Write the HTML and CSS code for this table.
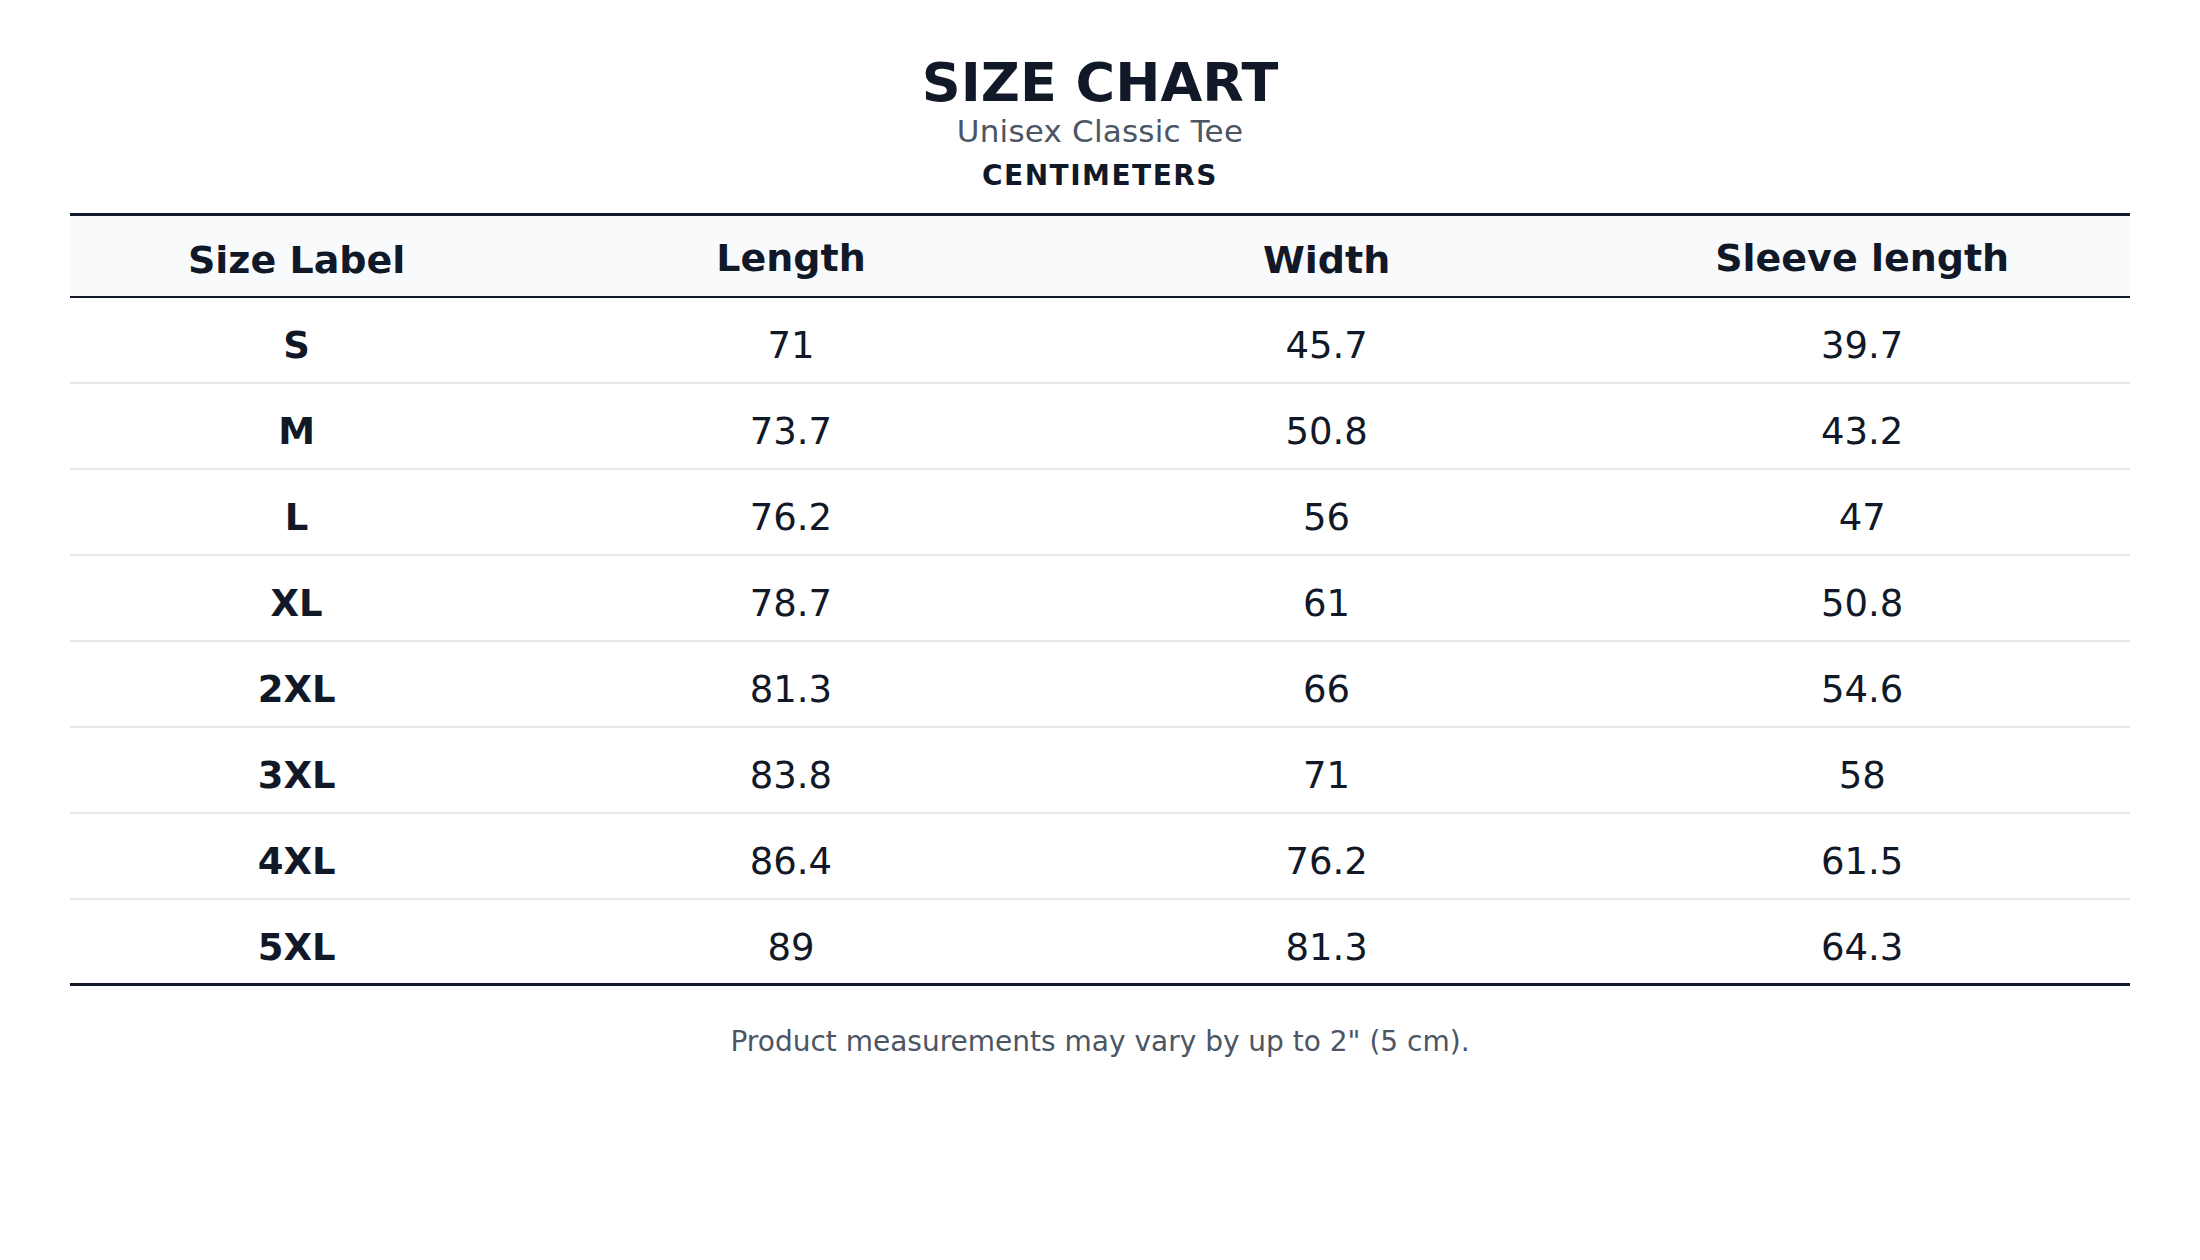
FILE: index.html
```html
<!DOCTYPE html>
<html lang="en">
<head>
<meta charset="utf-8">
<title>Size Chart</title>
<link rel="stylesheet" href="styles.css">
</head>
<body>
<main class="page">
  <header class="heading">
    <h1 class="title">SIZE CHART</h1>
    <p class="subtitle">Unisex Classic Tee</p>
    <p class="unit">CENTIMETERS</p>
  </header>
  <section class="chart">
    <div class="row head">
      <div class="cell">Size Label</div>
      <div class="cell desc">Length</div>
      <div class="cell">Width</div>
      <div class="cell desc">Sleeve length</div>
    </div>
    <div class="row"><div class="cell size">S</div><div class="cell">71</div><div class="cell">45.7</div><div class="cell">39.7</div></div>
    <div class="row"><div class="cell size">M</div><div class="cell">73.7</div><div class="cell">50.8</div><div class="cell">43.2</div></div>
    <div class="row"><div class="cell size">L</div><div class="cell">76.2</div><div class="cell">56</div><div class="cell">47</div></div>
    <div class="row"><div class="cell size">XL</div><div class="cell">78.7</div><div class="cell">61</div><div class="cell">50.8</div></div>
    <div class="row"><div class="cell size">2XL</div><div class="cell">81.3</div><div class="cell">66</div><div class="cell">54.6</div></div>
    <div class="row"><div class="cell size">3XL</div><div class="cell">83.8</div><div class="cell">71</div><div class="cell">58</div></div>
    <div class="row"><div class="cell size">4XL</div><div class="cell">86.4</div><div class="cell">76.2</div><div class="cell">61.5</div></div>
    <div class="row"><div class="cell size">5XL</div><div class="cell">89</div><div class="cell">81.3</div><div class="cell">64.3</div></div>
  </section>
  <p class="note">Product measurements may vary by up to 2" (5 cm).</p>
</main>
</body>
</html>
```
FILE: styles.css
```css
html, body {
  margin: 0;
  padding: 0;
  background: #ffffff;
}

body {
  font-family: "DejaVu Sans", "Noto Sans", sans-serif;
  color: #111827;
}

.page {
  padding: 53px 70px 0;
  display: flex;
  flex-direction: column;
}

.heading {
  display: flex;
  flex-direction: column;
  align-items: center;
  margin-bottom: 21px;
}

.title {
  margin: 0;
  font-size: 54px;
  line-height: 60px;
  font-weight: bold;
  color: #111827;
}

.subtitle {
  margin: 1px 0 0;
  font-size: 31px;
  line-height: 35px;
  letter-spacing: 0.2px;
  color: #4b5563;
}

.unit {
  margin: 10px 0 0;
  font-size: 28px;
  line-height: 33px;
  font-weight: bold;
  letter-spacing: 1.5px;
  color: #111827;
}

.chart {
  border-top: 3px solid #111827;
  display: flex;
  flex-direction: column;
}

.row {
  display: grid;
  grid-template-columns: 22% 26% 26% 26%;
  height: 86px;
  box-sizing: border-box;
  border-bottom: 2px solid #e5e7eb;
}

.row:last-child {
  border-bottom: 3px solid #111827;
}

.row.head {
  height: 82px;
  background: #f8fafc;
  border-bottom: 2px solid #111827;
}

.cell {
  text-align: center;
  font-size: 37px;
  line-height: 43px;
  padding-top: 26px;
}

.head .cell {
  font-size: 38px;
  line-height: 44px;
  font-weight: bold;
  padding-top: 22px;
}

.head .cell.desc {
  padding-top: 20px;
}

.cell.size {
  font-weight: bold;
}

.note {
  margin: 39px 0 0;
  text-align: center;
  font-size: 28px;
  line-height: 33px;
  color: #4b5563;
}
```
